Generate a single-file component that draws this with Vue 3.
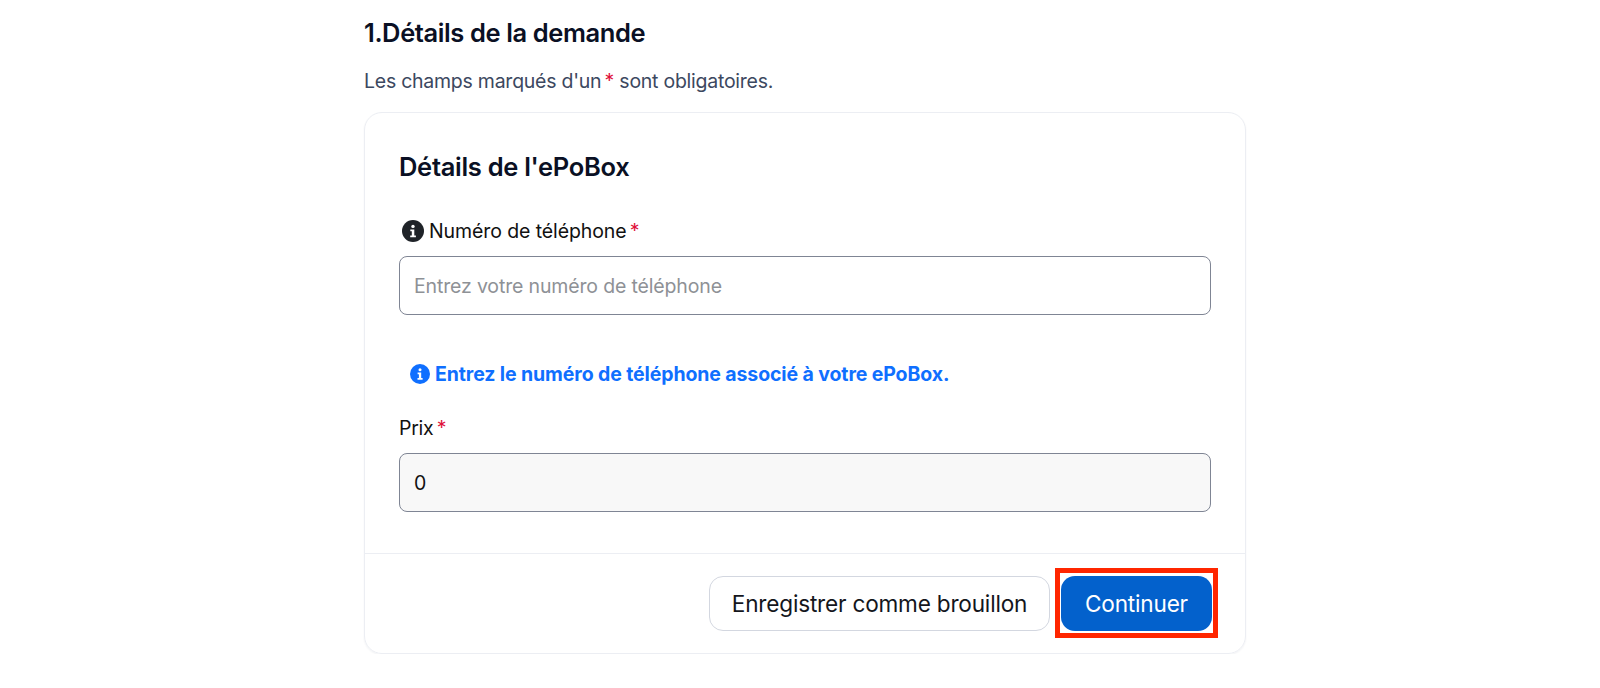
<template>
  <div class="page">
    <h1 class="titre">1.Détails de la demande</h1>
    <p class="aide">Les champs marqués d'un <span class="req">*</span> sont obligatoires.</p>

    <section class="carte">
      <div class="corps">
        <h2 class="sous-titre">Détails de l'ePoBox</h2>

        <label class="label label-icone">
          <svg class="icone" viewBox="0 0 22 22" width="22" height="22">
            <circle cx="11" cy="11" r="11" fill="#1f2328" />
            <circle cx="11" cy="6.4" r="1.7" fill="#fff" />
            <path d="M8.3 9.4h4v6h1.6v1.9H8.2v-1.9h1.6v-4.1H8.3z" fill="#fff" />
          </svg>
          <span>Numéro de téléphone <span class="req">*</span></span>
        </label>
        <input class="champ" type="text" placeholder="Entrez votre numéro de téléphone" />

        <p class="info">
          <svg class="icone" viewBox="0 0 20 20" width="20" height="20">
            <circle cx="10" cy="10" r="10" fill="#0f6fff" />
            <circle cx="10" cy="5.8" r="1.5" fill="#fff" />
            <path d="M7.6 8.5h3.6v5.5h1.4v1.7H7.5V14h1.4v-3.8H7.6z" fill="#fff" />
          </svg>
          <span>Entrez le numéro de téléphone associé à votre ePoBox.</span>
        </p>

        <label class="label">Prix <span class="req">*</span></label>
        <input class="champ champ-lecture" type="text" value="0" readonly />
      </div>

      <div class="pied">
        <button class="btn btn-secondaire">Enregistrer comme brouillon</button>
        <span class="surligne">
          <button class="btn btn-primaire">Continuer</button>
        </span>
      </div>
    </section>
  </div>
</template>

<script setup>
</script>

<style>
body {
  background: #fff;
}
</style>

<style scoped>
.page {
  width: 882px;
  margin-left: 364px;
  padding-top: 17px;
  font-family: Inter, "Liberation Sans", sans-serif;
  color: #0b0f1c;
}

.titre {
  margin: 0;
  font-size: 25.5px;
  line-height: 32px;
  font-weight: 600;
  letter-spacing: -0.4px;
  color: #0a1024;
}

.aide {
  margin: 19px 0 18px;
  font-size: 19.5px;
  line-height: 26px;
  letter-spacing: -0.25px;
  color: #3c4860;
}

.req {
  margin-left: -2px;
  color: #e0103a;
}

.carte {
  border: 1px solid #eceef3;
  border-radius: 18px;
  box-shadow: 0 1px 2px rgba(20, 30, 60, 0.06);
}

.corps {
  padding: 38px 34px 41px;
}

.sous-titre {
  margin: 0 0 35px;
  font-size: 25.5px;
  line-height: 32px;
  font-weight: 600;
  letter-spacing: -0.3px;
  color: #0a1024;
}

.label {
  display: block;
  margin-bottom: 12px;
  font-size: 19.5px;
  line-height: 26px;
  letter-spacing: -0.25px;
  color: #111;
}

.label-icone {
  display: flex;
  align-items: center;
  gap: 5px;
  padding-left: 3px;
  letter-spacing: -0.1px;
}

.icone {
  flex: none;
}

.champ {
  display: block;
  box-sizing: border-box;
  width: 100%;
  height: 59px;
  padding: 0 14px;
  border: 1px solid #7f8594;
  border-radius: 8px;
  outline: none;
  font-family: inherit;
  font-size: 19.5px;
  letter-spacing: -0.15px;
  color: #111;
}

.champ::placeholder {
  color: #8e9196;
  opacity: 1;
}

.champ-lecture {
  background: #f8f8f8;
}

.info {
  display: flex;
  align-items: center;
  gap: 5px;
  margin: 46px 0 28px;
  padding-left: 11px;
  font-size: 19.5px;
  line-height: 26px;
  font-weight: 700;
  letter-spacing: -0.11px;
  color: #0f6fff;
}

.pied {
  display: flex;
  justify-content: flex-end;
  gap: 11px;
  padding: 22px 33px 22px;
  border-top: 1px solid #eceef3;
}

.btn {
  box-sizing: border-box;
  height: 55px;
  border-radius: 14px;
  font-family: inherit;
  font-size: 22.6px;
  letter-spacing: -0.2px;
  cursor: pointer;
}

.btn-secondaire {
  width: 341px;
  border: 1px solid #d3d7e0;
  background: #fff;
  color: #14161c;
}

.btn-primaire {
  display: block;
  width: 151px;
  border: none;
  background: #0361cc;
  color: #fff;
}

/* cadre rouge d'annotation autour du bouton */
.surligne {
  position: relative;
  display: block;
}

.surligne::after {
  content: "";
  position: absolute;
  inset: -8px -6px -7px;
  border: 5px solid #ff2600;
  pointer-events: none;
}
</style>
